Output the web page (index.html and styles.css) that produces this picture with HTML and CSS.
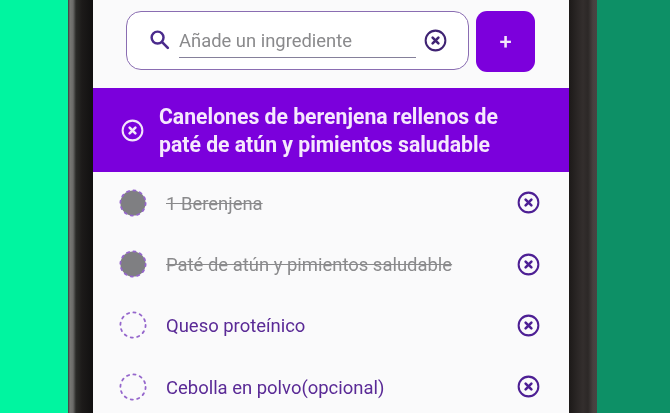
FILE: index.html
```html
<!DOCTYPE html>
<html lang="es">
<head>
<meta charset="utf-8">
<title>Ingredientes</title>
<link rel="stylesheet" href="styles.css">
</head>
<body>
<svg class="sprite" width="0" height="0" aria-hidden="true">
  <symbol id="x-circle" viewBox="0 0 24 24">
    <circle cx="12" cy="12" r="10.3" fill="none" stroke="currentColor" stroke-width="2.1"/>
    <path d="M9 9 15 15M15 9 9 15" fill="none" stroke="currentColor" stroke-width="2.7" stroke-linecap="round"/>
  </symbol>
  <symbol id="dash-circle" viewBox="0 0 28 28">
    <circle cx="14" cy="14" r="12.6" stroke="#9566cc" stroke-width="1.8" stroke-dasharray="2.2 4.4" stroke-linecap="round"/>
  </symbol>
</svg>
<div class="app">
  <div class="side side-left"></div>
  <div class="phone">
    <main class="screen">
      <div class="search-row">
        <div class="search-box">
          <svg class="search-icon" viewBox="0 0 24 24"><circle cx="9.8" cy="9.8" r="6.8" fill="none" stroke="currentColor" stroke-width="2.8"/><path d="M15 15 21.5 21.5" stroke="currentColor" stroke-width="3" stroke-linecap="round"/></svg>
          <div class="search-input">Añade un ingrediente</div>
          <svg class="x-icon x-search"><use href="#x-circle"/></svg>
        </div>
        <button class="add-btn">+</button>
      </div>
      <div class="banner">
        <svg class="x-icon x-banner"><use href="#x-circle"/></svg>
        <h1 class="banner-title">Canelones de berenjena rellenos de paté de atún y pimientos saludable</h1>
      </div>
      <ul class="list">
        <li class="item done">
          <svg class="check"><use href="#dash-circle"/></svg>
          <span class="label">1 Berenjena</span>
          <svg class="x-icon"><use href="#x-circle"/></svg>
        </li>
        <li class="item done">
          <svg class="check"><use href="#dash-circle"/></svg>
          <span class="label">Paté de atún y pimientos saludable</span>
          <svg class="x-icon"><use href="#x-circle"/></svg>
        </li>
        <li class="item">
          <svg class="check"><use href="#dash-circle"/></svg>
          <span class="label">Queso proteínico</span>
          <svg class="x-icon"><use href="#x-circle"/></svg>
        </li>
        <li class="item">
          <svg class="check"><use href="#dash-circle"/></svg>
          <span class="label">Cebolla en polvo(opcional)</span>
          <svg class="x-icon"><use href="#x-circle"/></svg>
        </li>
      </ul>
    </main>
  </div>
  <div class="side side-right"></div>
</div>
</body>
</html>
```
FILE: styles.css
```css
* { box-sizing: border-box; }
html, body { margin: 0; height: 413px; overflow: hidden; }
body { font-family: Roboto, "Liberation Sans", sans-serif; background: #0d9066; }
.sprite { display: block; height: 0; }
.app { display: flex; width: 670px; height: 413px; overflow: hidden; }
.side { flex: none; }
.side-left { width: 68px; background: #00f5a0; }
.side-right { flex: 1; background: #0d9066; }
.phone {
  flex: none;
  width: 529px;
  padding: 0 28px 0 25px;
  background: linear-gradient(90deg, #3a3a38 0, #777774 2px, #6a6a68 5px, #2a2a28 8px, #1c1a19 14px, #111010 25px);
  position: relative;
}
.phone::after {
  content: "";
  position: absolute;
  top: 0; bottom: 0; right: 0;
  width: 28px;
  background: linear-gradient(90deg, #1c1918 0, #2a2625 8px, #332e2d 14px, #2c2827 19px, #46413f 24px, #4a4543 28px);
}
.screen { background: #fafafb; height: 413px; overflow: hidden; padding-top: 11px; filter: blur(0.35px); }
.search-row { display: flex; align-items: flex-start; gap: 7px; padding-left: 33px; height: 77px; }
.search-box {
  width: 343px;
  height: 59px;
  background: #fff;
  border: 1.6px solid #8a6db2;
  border-radius: 15px;
  display: flex;
  align-items: center;
  padding: 0 21px 0 22px;
}
.search-icon { width: 21px; height: 21px; color: #4a2a8c; flex: none; margin-right: 9px; margin-bottom: 2px; }
.search-input {
  width: 237px;
  height: 33px;
  line-height: 32px;
  font-size: 18.4px;
  color: #8a8a8c;
  border-bottom: 1.6px solid #85809a;
  margin-top: 1px;
  white-space: nowrap;
}
.x-icon { width: 23px; height: 23px; color: #4d1f94; flex: none; }
.x-search { margin-left: 8px; color: #3f2373; }
.add-btn {
  width: 59px;
  height: 61px;
  border: 0;
  border-radius: 11px;
  background: #7c00dc;
  color: #f3e6fb;
  font: 500 22px Roboto, sans-serif;
  padding: 0;
}
.banner {
  height: 84px;
  background: #7b00dc;
  display: flex;
  align-items: center;
  padding: 0 50px 0 28px;
  color: #f6e8fd;
}
.x-banner { color: #f3e4fb; margin-right: 15px; }
.banner-title { margin: 1px 0 0; font-size: 21.2px; line-height: 28px; font-weight: 700; }
.list { list-style: none; margin: 0; padding: 0; }
.item { display: flex; align-items: center; height: 61.4px; padding: 0 29px 0 26px; color: #5a2a96; }
.check { width: 28px; height: 28px; flex: none; margin-right: 19px; fill: transparent; }
.done .check { fill: #7f7f82; }
.done .label { color: #8a8a8c; text-decoration: line-through; }
.label { flex: 1; font-size: 18.45px; white-space: nowrap; padding-top: 2px; }
.item .x-icon { color: #4d1f94; }
```
